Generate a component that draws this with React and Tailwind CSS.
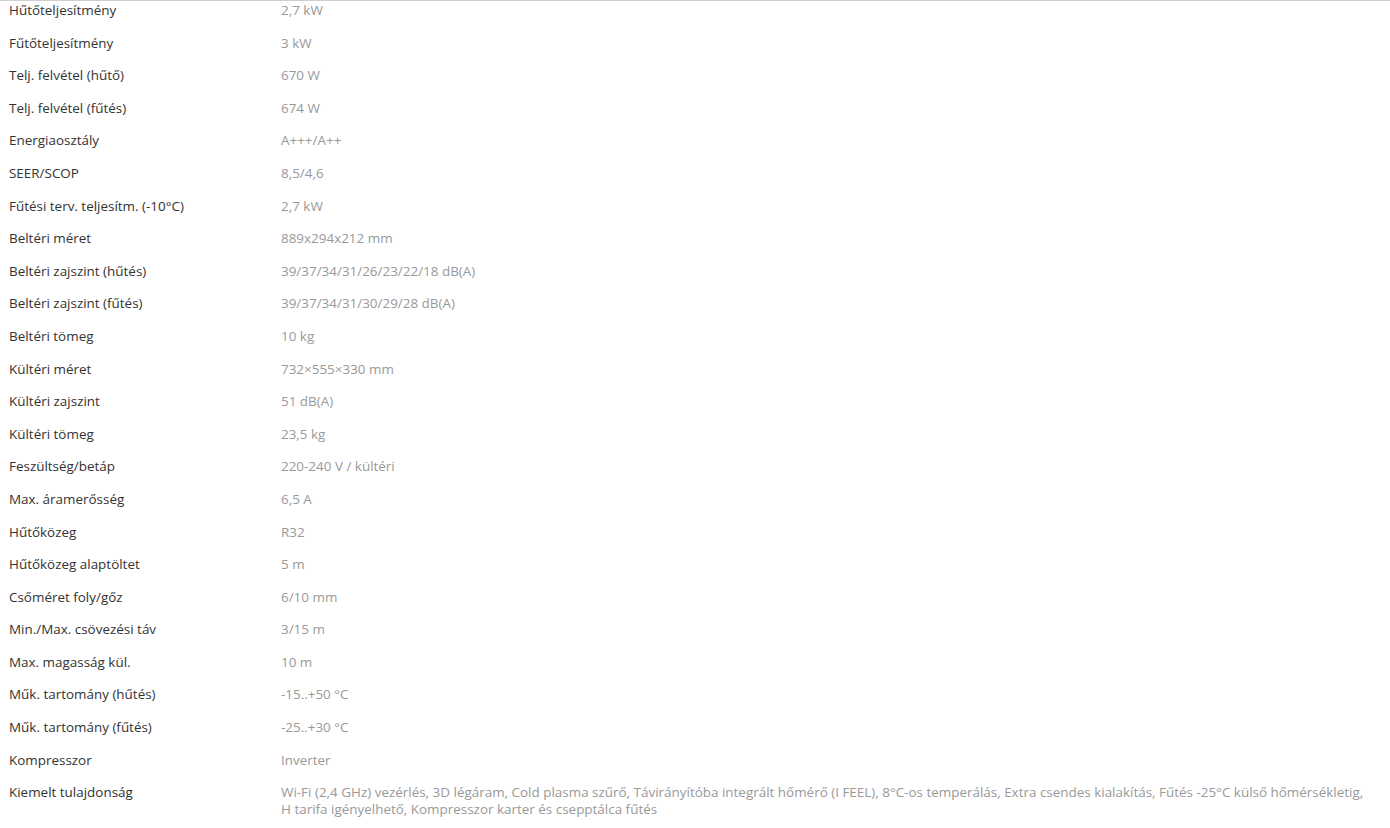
const specs = [
    ['Hűtőteljesítmény', '2,7 kW'],
    ['Fűtőteljesítmény', '3 kW'],
    ['Telj. felvétel (hűtő)', '670 W'],
    ['Telj. felvétel (fűtés)', '674 W'],
    ['Energiaosztály', 'A+++/A++'],
    ['SEER/SCOP', '8,5/4,6'],
    ['Fűtési terv. teljesítm. (-10°C)', '2,7 kW'],
    ['Beltéri méret', '889x294x212 mm'],
    ['Beltéri zajszint (hűtés)', '39/37/34/31/26/23/22/18 dB(A)'],
    ['Beltéri zajszint (fűtés)', '39/37/34/31/30/29/28 dB(A)'],
    ['Beltéri tömeg', '10 kg'],
    ['Kültéri méret', '732×555×330 mm'],
    ['Kültéri zajszint', '51 dB(A)'],
    ['Kültéri tömeg', '23,5 kg'],
    ['Feszültség/betáp', '220-240 V / kültéri'],
    ['Max. áramerősség', '6,5 A'],
    ['Hűtőközeg', 'R32'],
    ['Hűtőközeg alaptöltet', '5 m'],
    ['Csőméret foly/gőz', '6/10 mm'],
    ['Min./Max. csövezési táv', '3/15 m'],
    ['Max. magasság kül.', '10 m'],
    ['Műk. tartomány (hűtés)', '-15..+50 °C'],
    ['Műk. tartomány (fűtés)', '-25..+30 °C'],
    ['Kompresszor', 'Inverter'],
    ['Kiemelt tulajdonság', 'Wi-Fi (2,4 GHz) vezérlés, 3D légáram, Cold plasma szűrő, Távirányítóba integrált hőmérő (I FEEL), 8°C-os temperálás, Extra csendes kialakítás, Fűtés -25°C külső hőmérsékletig, H tarifa igényelhető, Kompresszor karter és csepptálca fűtés'],
]

export default function App() {
    return (
        <div className="w-[1390px] h-[828px] bg-white overflow-hidden font-['Open_Sans',sans-serif] text-[13.45px] leading-[17px]">
            <div className="border-t border-[#cfcfcf] pt-[1px] flex flex-col gap-[15.6px]">
                {specs.map(([label, value]) => (
                    <div key={label} className="flex">
                        <div className="w-[281px] shrink-0 pl-[9px] text-[#333]">{label}</div>
                        <div className="w-[1088px] text-[#999]">{value}</div>
                    </div>
                ))}
            </div>
        </div>
    )
}
